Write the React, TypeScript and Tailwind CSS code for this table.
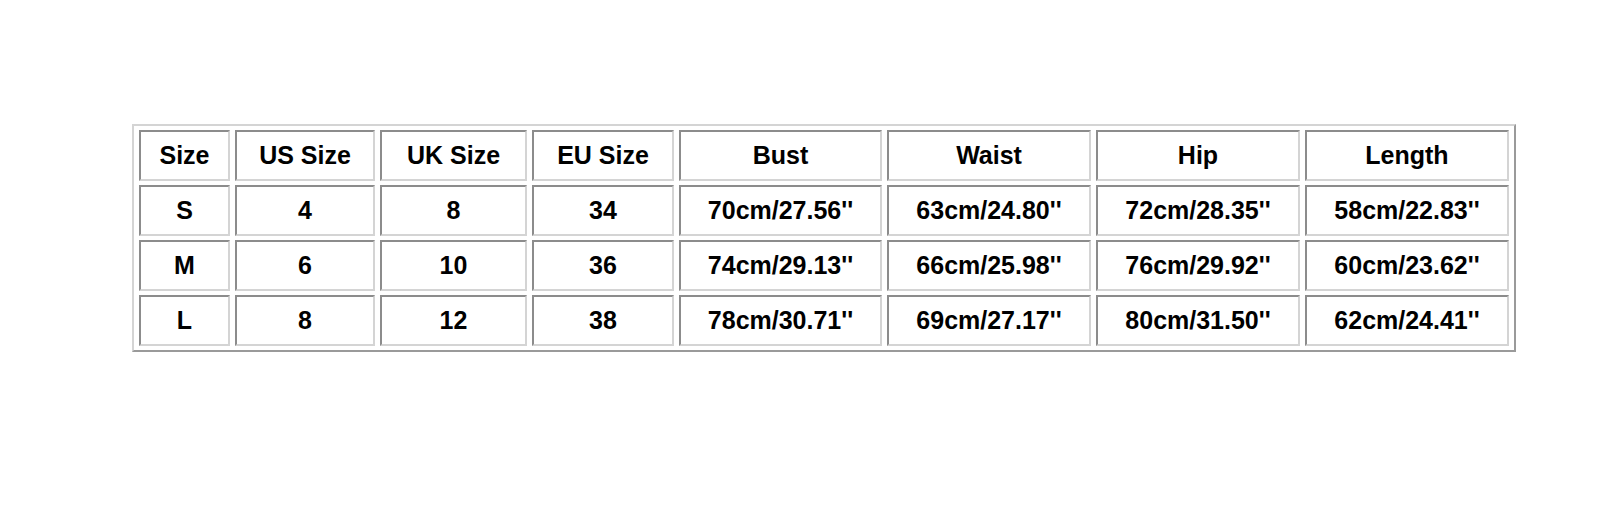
import React from "react";

const headers = ["Size", "US Size", "UK Size", "EU Size", "Bust", "Waist", "Hip", "Length"];
const rows = [
  ["S", "4", "8", "34", "70cm/27.56''", "63cm/24.80''", "72cm/28.35''", "58cm/22.83''"],
  ["M", "6", "10", "36", "74cm/29.13''", "66cm/25.98''", "76cm/29.92''", "60cm/23.62''"],
  ["L", "8", "12", "38", "78cm/30.71''", "69cm/27.17''", "80cm/31.50''", "62cm/24.41''"],
];
const widths = ["w-[91px]", "w-[140px]", "w-[147px]", "w-[142px]", "w-[203px]", "w-[204px]", "w-[204px]", "w-[204px]"];

const cell =
  "h-[51px] p-0 text-center align-middle border-2 border-solid border-t-[#8c8c8c] border-l-[#8c8c8c] border-b-[#d4d4d4] border-r-[#d4d4d4] font-bold text-[25px] text-black";

export default function App() {
  return (
    <div className="w-[1600px] h-[510px] bg-white pl-[132px] pt-[124px]" style={{ fontFamily: '"Liberation Sans", Arial, sans-serif' }}>
      <table className="table-fixed border-separate border-spacing-x-[5px] border-spacing-y-[4px] w-[1384px] border-2 border-solid border-t-[#d4d4d4] border-l-[#d4d4d4] border-b-[#9a9a9a] border-r-[#9a9a9a]">
        <colgroup>
          {widths.map((w, i) => (
            <col key={i} className={w} />
          ))}
        </colgroup>
        <tbody>
          <tr>
            {headers.map((h) => (
              <td key={h} className={cell}>
                {h}
              </td>
            ))}
          </tr>
          {rows.map((r) => (
            <tr key={r[0]}>
              {r.map((c, i) => (
                <td key={i} className={cell}>
                  {c}
                </td>
              ))}
            </tr>
          ))}
        </tbody>
      </table>
    </div>
  );
}
